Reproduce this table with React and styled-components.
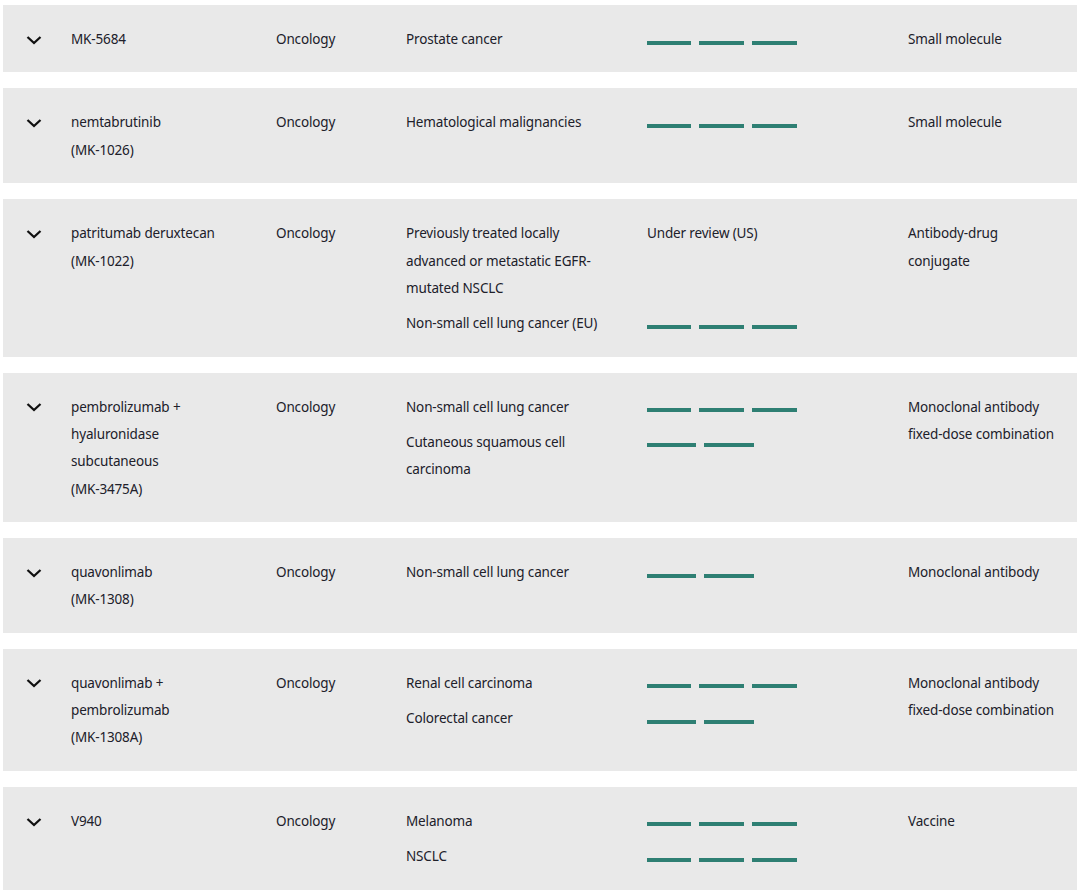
import React from "react";
import styled, { createGlobalStyle } from "styled-components";

const Global = createGlobalStyle`
  html, body { margin: 0; padding: 0; background: #ffffff; }
  body { font-family: "Noto Sans", "Open Sans", Arial, sans-serif; color: #20202a; }
`;

const List = styled.div`
  display: flex;
  flex-direction: column;
  gap: 16px;
  padding: 5px 3px;
`;

const Row = styled.div`
  display: grid;
  grid-template-columns: 68px 205px 130px 502px 1fr;
  align-items: start;
  background: #e9e9e9;
  padding: 21px 0 19.2px;
  font-size: 13.5px;
  letter-spacing: -0.15px;
  line-height: 27.3px;
`;

const Toggle = styled.button`
  display: flex;
  align-items: center;
  justify-content: flex-start;
  height: 27.3px;
  padding: 0 0 0 23px;
  margin: 0;
  border: 0;
  background: transparent;
  cursor: pointer;
  color: #111;
`;

const Cell = styled.div``;

const Line = styled.div``;

const Indications = styled.div`
  display: grid;
  grid-template-columns: 241px 261px;
  row-gap: 8px;
  align-items: start;
`;

const IndText = styled.div`
  max-width: 205px;
`;

const Bars = styled.div`
  display: flex;
  gap: 8px;
  padding-top: 14.5px;
`;

const Bar = styled.span`
  display: block;
  height: 4px;
  width: ${(p) => p.$w}px;
  background: #2e7f73;
`;

const BAR_SETS = {
  3: [44, 45, 45],
  2: [49, 50],
};

const rows = [
  {
    name: ["MK-5684"],
    area: "Oncology",
    ind: [{ t: "Prostate cancer", bars: 3 }],
    mod: ["Small molecule"],
  },
  {
    name: ["nemtabrutinib", "(MK-1026)"],
    area: "Oncology",
    ind: [{ t: "Hematological malignancies", bars: 3 }],
    mod: ["Small molecule"],
  },
  {
    name: ["patritumab deruxtecan", "(MK-1022)"],
    area: "Oncology",
    ind: [
      {
        t: "Previously treated locally advanced or metastatic EGFR-mutated NSCLC",
        status: "Under review (US)",
      },
      { t: "Non-small cell lung cancer (EU)", bars: 3 },
    ],
    mod: ["Antibody-drug", "conjugate"],
  },
  {
    name: ["pembrolizumab +", "hyaluronidase", "subcutaneous", "(MK-3475A)"],
    area: "Oncology",
    ind: [
      { t: "Non-small cell lung cancer", bars: 3 },
      { t: "Cutaneous squamous cell carcinoma", bars: 2 },
    ],
    mod: ["Monoclonal antibody", "fixed-dose combination"],
  },
  {
    name: ["quavonlimab", "(MK-1308)"],
    area: "Oncology",
    ind: [{ t: "Non-small cell lung cancer", bars: 2 }],
    mod: ["Monoclonal antibody"],
  },
  {
    name: ["quavonlimab +", "pembrolizumab", "(MK-1308A)"],
    area: "Oncology",
    ind: [
      { t: "Renal cell carcinoma", bars: 3 },
      { t: "Colorectal cancer", bars: 2 },
    ],
    mod: ["Monoclonal antibody", "fixed-dose combination"],
  },
  {
    name: ["V940"],
    area: "Oncology",
    ind: [
      { t: "Melanoma", bars: 3 },
      { t: "NSCLC", bars: 3 },
    ],
    mod: ["Vaccine"],
  },
];

const Chevron = () => (
  <svg width="16" height="10" viewBox="0 0 16 10" aria-hidden="true">
    <polyline
      points="1.5,2 8,8 14.5,2"
      fill="none"
      stroke="currentColor"
      strokeWidth="2.3"
      strokeLinecap="butt"
      strokeLinejoin="miter"
    />
  </svg>
);

export default function App() {
  return (
    <>
      <Global />
      <List>
        {rows.map((r, i) => (
          <Row key={i}>
            <Toggle aria-label="Expand">
              <Chevron />
            </Toggle>
            <Cell>
              {r.name.map((n, j) => (
                <Line key={j}>{n}</Line>
              ))}
            </Cell>
            <Cell>{r.area}</Cell>
            <Indications>
              {r.ind.map((d, j) => (
                <React.Fragment key={j}>
                  <IndText>{d.t}</IndText>
                  {d.status ? (
                    <Line>{d.status}</Line>
                  ) : (
                    <Bars>
                      {BAR_SETS[d.bars].map((w, k) => (
                        <Bar key={k} $w={w} />
                      ))}
                    </Bars>
                  )}
                </React.Fragment>
              ))}
            </Indications>
            <Cell>
              {r.mod.map((m, j) => (
                <Line key={j}>{m}</Line>
              ))}
            </Cell>
          </Row>
        ))}
      </List>
    </>
  );
}
